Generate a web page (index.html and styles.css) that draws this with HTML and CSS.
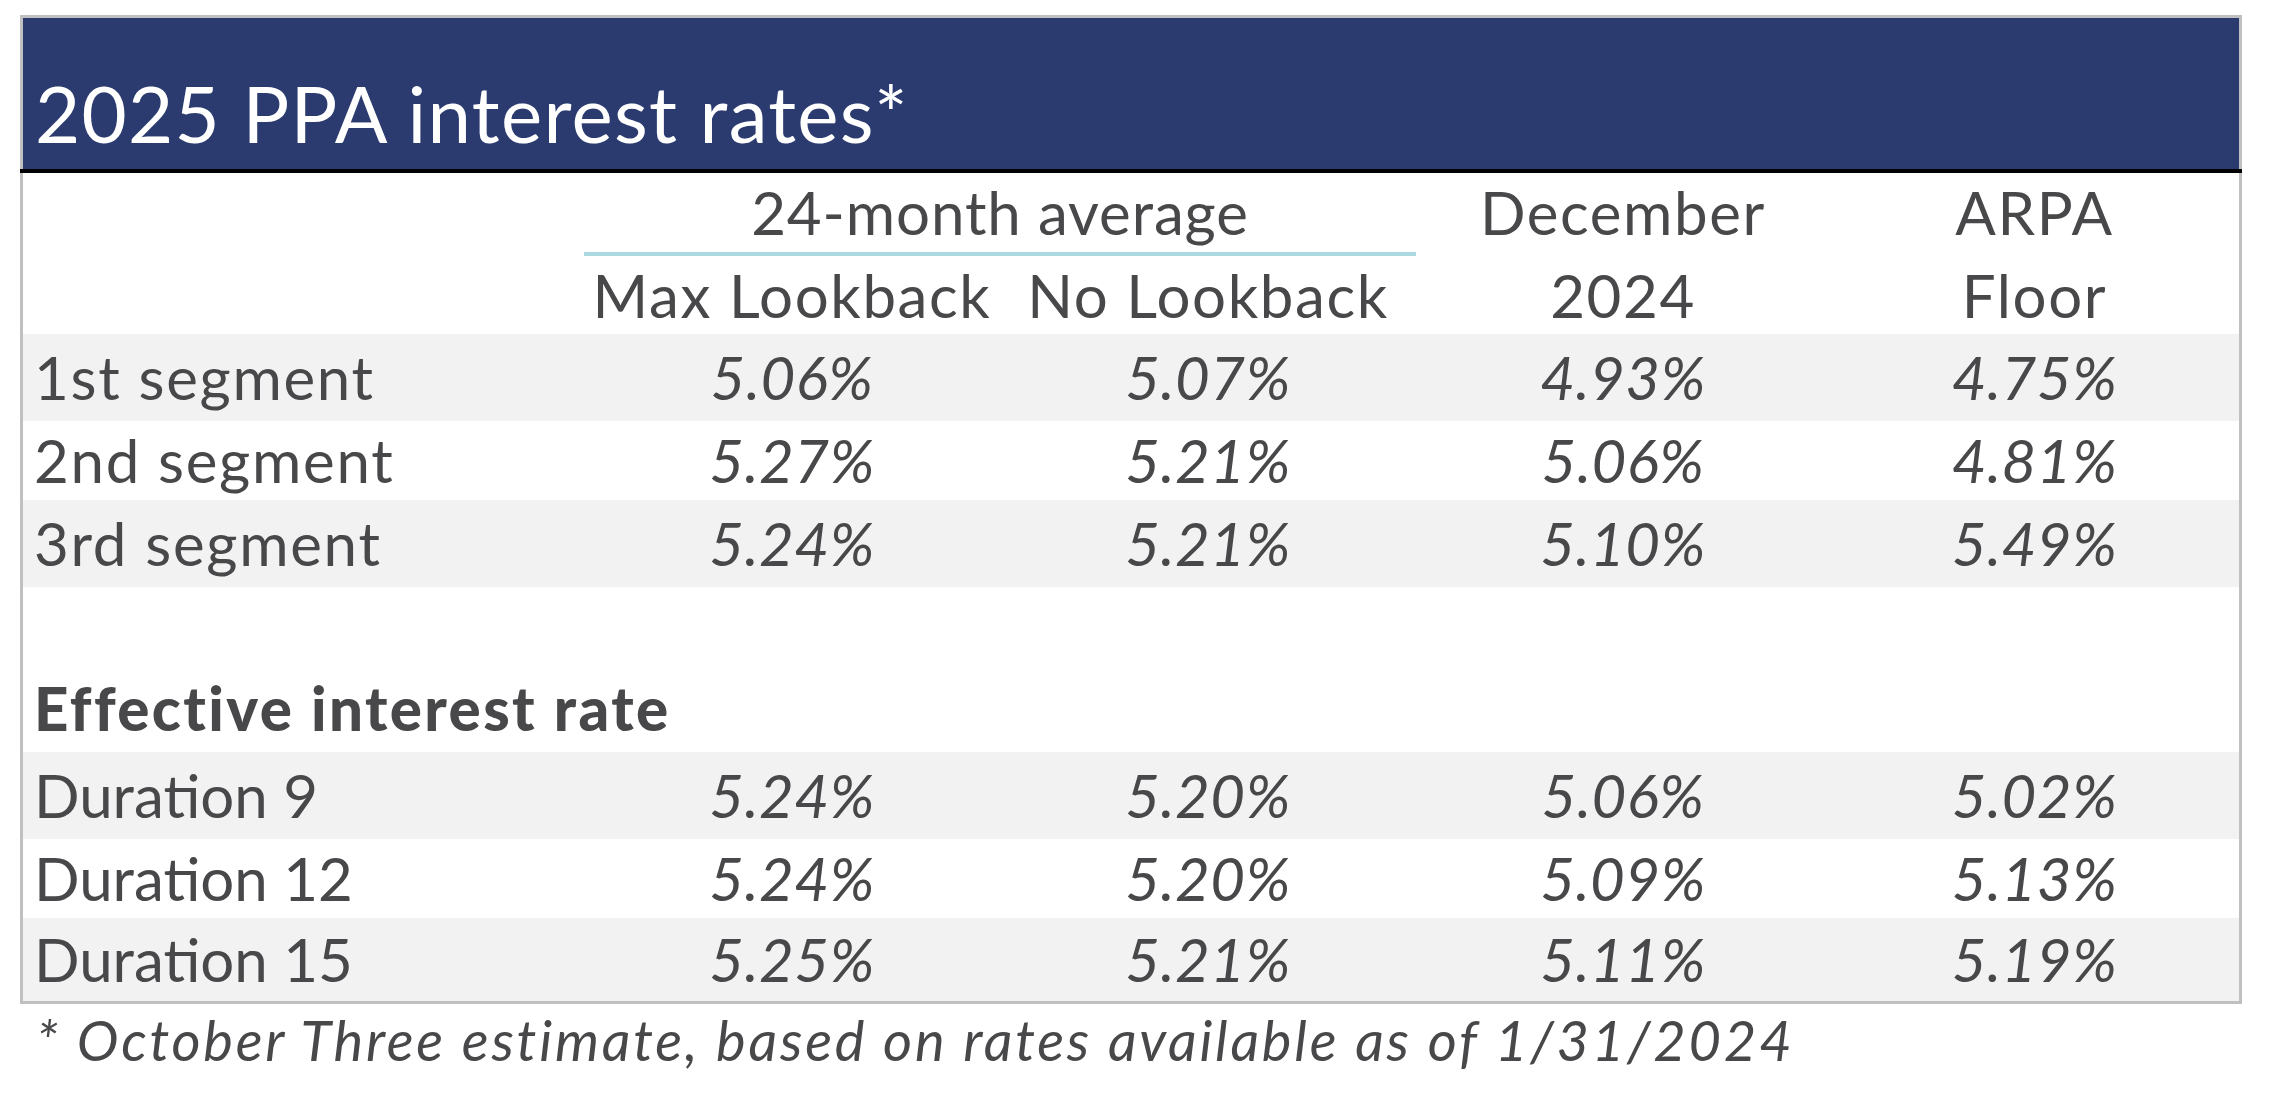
FILE: index.html
```html
<!DOCTYPE html>
<html lang="en">
<head>
<meta charset="utf-8">
<title>2025 PPA interest rates</title>
<link rel="stylesheet" href="styles.css">
</head>
<body>
<div class="frame">
  <div class="title">2025 PPA interest rates*</div>
  <div class="rule"></div>
  <div class="row hdr hdr-top">
    <div class="cell"></div>
    <div class="cell span2">24-month average</div>
    <div class="cell">December</div>
    <div class="cell">ARPA</div>
  </div>
  <div class="row hdr hdr-bot">
    <div class="cell"></div>
    <div class="cell">Max Lookback</div>
    <div class="cell">No Lookback</div>
    <div class="cell">2024</div>
    <div class="cell">Floor</div>
  </div>
  <div class="row band">
    <div class="cell label seg">1st segment</div>
    <div class="cell num">5.06%</div>
    <div class="cell num">5.07%</div>
    <div class="cell num">4.93%</div>
    <div class="cell num">4.75%</div>
  </div>
  <div class="row">
    <div class="cell label seg">2nd segment</div>
    <div class="cell num">5.27%</div>
    <div class="cell num">5.21%</div>
    <div class="cell num">5.06%</div>
    <div class="cell num">4.81%</div>
  </div>
  <div class="row band">
    <div class="cell label seg">3rd segment</div>
    <div class="cell num">5.24%</div>
    <div class="cell num">5.21%</div>
    <div class="cell num">5.10%</div>
    <div class="cell num">5.49%</div>
  </div>
  <div class="spacer"></div>
  <div class="row section">
    <div class="cell label strong">Effective interest rate</div>
  </div>
  <div class="row band">
    <div class="cell label">Duration 9</div>
    <div class="cell num">5.24%</div>
    <div class="cell num">5.20%</div>
    <div class="cell num">5.06%</div>
    <div class="cell num">5.02%</div>
  </div>
  <div class="row">
    <div class="cell label">Duration 12</div>
    <div class="cell num">5.24%</div>
    <div class="cell num">5.20%</div>
    <div class="cell num">5.09%</div>
    <div class="cell num">5.13%</div>
  </div>
  <div class="row band last">
    <div class="cell label">Duration 15</div>
    <div class="cell num">5.25%</div>
    <div class="cell num">5.21%</div>
    <div class="cell num">5.11%</div>
    <div class="cell num">5.19%</div>
  </div>
</div>
<p class="note">* October Three estimate, based on rates available as of 1/31/2024</p>
</body>
</html>
```
FILE: styles.css
```css
html, body {
  margin: 0;
  padding: 0;
  background: #ffffff;
}

body {
  font-family: Lato, "Open Sans", sans-serif;
  color: #48484a;
}

.frame {
  margin: 15px 0 0 20px;
  width: 2216px;
  border: 3px solid #c0c0c0;
}

.title {
  box-sizing: border-box;
  height: 151px;
  background: #2b3b6f;
  color: #ffffff;
  font-size: 78px;
  line-height: 90px;
  letter-spacing: 1.3px;
  padding: 0 0 11px 12px;
  display: flex;
  align-items: flex-end;
  white-space: nowrap;
}

.rule {
  height: 4px;
  background: #000000;
  margin: 0 -3px;
}

.row {
  display: grid;
  grid-template-columns: 561px 416px 416px 414px 1fr;
  align-items: start;
  height: 79px;
  font-size: 60px;
  line-height: 79px;
}

.cell {
  text-align: center;
  white-space: nowrap;
}

.hdr .cell {
  letter-spacing: 1.6px;
}

.hdr-top {
  height: 83px;
}

.hdr .span2 {
  grid-column: span 2;
  border-bottom: 4px solid #acd8e0;
  letter-spacing: 0.9px;
}

.hdr-bot {
  height: 78px;
  line-height: 78px;
}

.band {
  background: #f2f2f2;
  height: 87px;
  line-height: 87px;
}

.band.last {
  height: 83px;
  line-height: 83px;
}

.label {
  text-align: left;
  padding-left: 11px;
}

.seg {
  letter-spacing: 1.7px;
}

.num {
  font-style: italic;
  letter-spacing: 0.5px;
}

.spacer {
  height: 78px;
}

.section {
  height: 87px;
  line-height: 87px;
}

.strong {
  font-weight: 900;
  letter-spacing: 2.4px;
  grid-column: span 3;
}

.note {
  margin: 1px 0 0 36px;
  font-size: 56px;
  line-height: 70px;
  letter-spacing: 2.8px;
  font-style: italic;
  white-space: nowrap;
}
```
